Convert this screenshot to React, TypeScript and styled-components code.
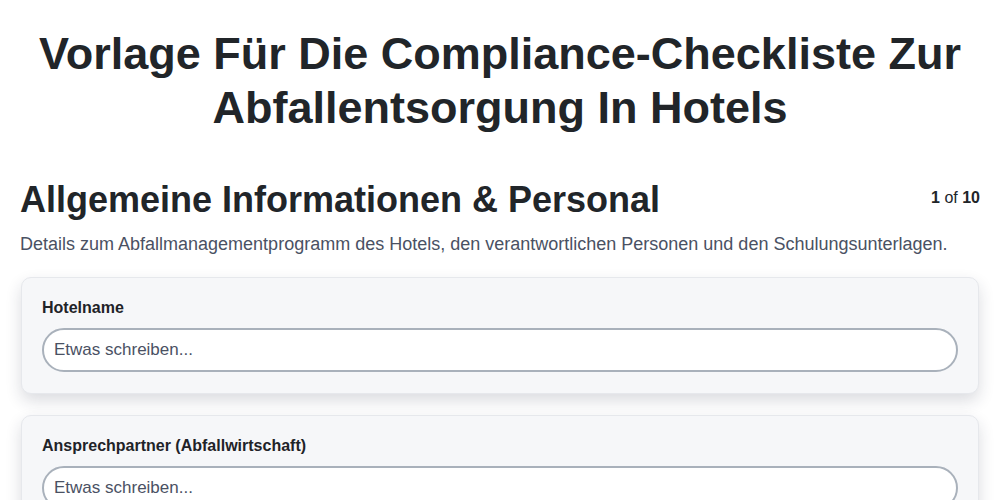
import React from "react";
import styled, { createGlobalStyle } from "styled-components";

const GlobalStyle = createGlobalStyle`
  html, body {
    margin: 0;
    padding: 0;
    background: #ffffff;
    font-family: "Liberation Sans", Arial, sans-serif;
    color: #1f2328;
  }
  * { box-sizing: border-box; }
`;

const Page = styled.main`
  padding: 0 20px 40px;
`;

const Title = styled.h1`
  margin: 27px 0 0;
  text-align: center;
  font-size: 45px;
  line-height: 54px;
  font-weight: 700;
  color: #212529;
`;

const SectionHead = styled.div`
  display: flex;
  align-items: flex-start;
  justify-content: space-between;
  margin-top: 43px;
`;

const SectionTitle = styled.h2`
  margin: 0;
  font-size: 36px;
  line-height: 44px;
  font-weight: 700;
  color: #212529;
`;

const Counter = styled.div`
  font-size: 16px;
  line-height: 20px;
  margin-top: 10px;
  color: #212529;
  b { font-weight: 700; }
`;

const Description = styled.p`
  margin: 9px 0 0;
  font-size: 18px;
  line-height: 26px;
  color: #4a5163;
`;

const Fields = styled.div`
  display: flex;
  flex-direction: column;
  gap: 21px;
  margin-top: 20px;
`;

const Card = styled.section`
  background: #f6f7f9;
  border: 1px solid #e6e8ec;
  border-radius: 10px;
  padding: 20px 20px 21px;
  margin: 0 1px;
  box-shadow: 0 7px 16px rgba(30, 40, 60, 0.16);
`;

const Label = styled.label`
  display: block;
  font-size: 16px;
  font-weight: 700;
  line-height: 20px;
  color: #1f2328;
  margin-bottom: 10px;
`;

const Input = styled.input`
  display: block;
  width: 100%;
  height: 44px;
  border: 2px solid #a9b1bb;
  border-radius: 22px;
  background: #ffffff;
  padding: 0 10px;
  font-family: "Liberation Sans", Arial, sans-serif;
  font-size: 17px;
  color: #212529;
  outline: none;
  &::placeholder {
    color: #4a5163;
    opacity: 1;
  }
`;

const fields = ["Hotelname", "Ansprechpartner (Abfallwirtschaft)", "Position"];

export default function App() {
  return (
    <>
      <GlobalStyle />
      <Page>
        <Title>
          Vorlage Für Die Compliance-Checkliste Zur
          <br />
          Abfallentsorgung In Hotels
        </Title>
        <SectionHead>
          <SectionTitle>Allgemeine Informationen &amp; Personal</SectionTitle>
          <Counter>
            <b>1</b> of <b>10</b>
          </Counter>
        </SectionHead>
        <Description>
          Details zum Abfallmanagementprogramm des Hotels, den verantwortlichen Personen und den Schulungsunterlagen.
        </Description>
        <Fields>
          {fields.map((f) => (
            <Card key={f}>
              <Label>{f}</Label>
              <Input placeholder="Etwas schreiben..." />
            </Card>
          ))}
        </Fields>
      </Page>
    </>
  );
}
